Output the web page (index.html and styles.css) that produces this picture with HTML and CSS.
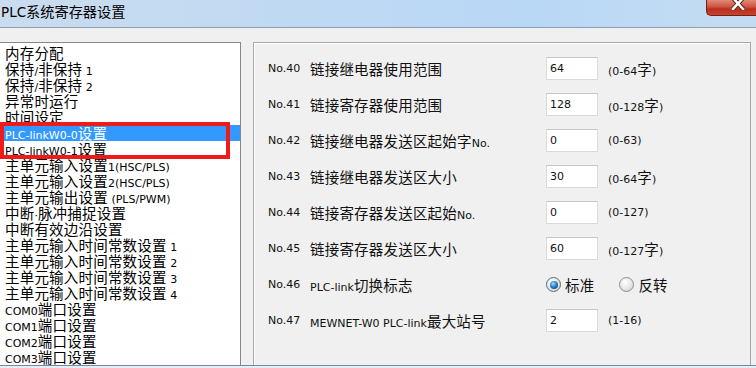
FILE: index.html
```html
<!DOCTYPE html>
<html>
  <head>
    <title>PLC系统寄存器设置</title>
    <link rel="stylesheet" href="styles.css">
  </head>

  <body>
    <div class="window">
      <div class="titlebar">
        <div class="title">PLC<span class="h">系统寄存器设置</span></div>
        <div class="close">
          <svg width="14" height="13" viewBox="0 0 14 13">
            <path d="M2 1 L12 12 M12 1 L2 12" stroke="#5a1a12" stroke-width="4.4" stroke-linecap="square"/>
            <path d="M2 1 L12 12 M12 1 L2 12" stroke="#ffffff" stroke-width="2.6" stroke-linecap="square"/>
          </svg>
        </div>
      </div>

      <div class="main">
        <ul class="list">
          <li><span class="h">内存分配</span></li>
          <li><span class="h">保持</span>/<span class="h">非保持</span> 1</li>
          <li><span class="h">保持</span>/<span class="h">非保持</span> 2</li>
          <li><span class="h">异常时运行</span></li>
          <li><span class="h">时间设定</span></li>
          <li class="sel">PLC-linkW0-0<span class="h">设置</span></li>
          <li>PLC-linkW0-1<span class="h">设置</span></li>
          <li><span class="h">主单元输入设置</span>1(HSC/PLS)</li>
          <li><span class="h">主单元输入设置</span>2(HSC/PLS)</li>
          <li><span class="h">主单元输出设置</span> (PLS/PWM)</li>
          <li><span class="h">中断</span>·<span class="h">脉冲捕捉设置</span></li>
          <li><span class="h">中断有效边沿设置</span></li>
          <li><span class="h">主单元输入时间常数设置</span> 1</li>
          <li><span class="h">主单元输入时间常数设置</span> 2</li>
          <li><span class="h">主单元输入时间常数设置</span> 3</li>
          <li><span class="h">主单元输入时间常数设置</span> 4</li>
          <li>COM0<span class="h">端口设置</span></li>
          <li>COM1<span class="h">端口设置</span></li>
          <li>COM2<span class="h">端口设置</span></li>
          <li>COM3<span class="h">端口设置</span></li>
          <div class="mark"></div>
        </ul>

        <div class="panel">
          <div class="row">
            <span class="no">No.40</span>
            <span class="name"><span class="h">链接继电器使用范围</span></span>
            <span class="val">64</span>
            <span class="range">(0-64<span class="h">字</span>)</span>
          </div>
          <div class="row">
            <span class="no">No.41</span>
            <span class="name"><span class="h">链接寄存器使用范围</span></span>
            <span class="val">128</span>
            <span class="range">(0-128<span class="h">字</span>)</span>
          </div>
          <div class="row">
            <span class="no">No.42</span>
            <span class="name"><span class="h">链接继电器发送区起始字</span>No.</span>
            <span class="val">0</span>
            <span class="range">(0-63)</span>
          </div>
          <div class="row">
            <span class="no">No.43</span>
            <span class="name"><span class="h">链接继电器发送区大小</span></span>
            <span class="val">30</span>
            <span class="range">(0-64<span class="h">字</span>)</span>
          </div>
          <div class="row">
            <span class="no">No.44</span>
            <span class="name"><span class="h">链接寄存器发送区起始</span>No.</span>
            <span class="val">0</span>
            <span class="range">(0-127)</span>
          </div>
          <div class="row">
            <span class="no">No.45</span>
            <span class="name"><span class="h">链接寄存器发送区大小</span></span>
            <span class="val">60</span>
            <span class="range">(0-127<span class="h">字</span>)</span>
          </div>
          <div class="row">
            <span class="no">No.46</span>
            <span class="name">PLC-link<span class="h">切换标志</span></span>
            <span class="radio on"><i></i><span class="h">标准</span></span>
            <span class="radio"><i></i><span class="h">反转</span></span>
          </div>
          <div class="row">
            <span class="no">No.47</span>
            <span class="name">MEWNET-W0 PLC-link<span class="h">最大站号</span></span>
            <span class="val">2</span>
            <span class="range">(1-16)</span>
          </div>
        </div>
      </div>

      <div class="foot"></div>
    </div>
  </body>
</html>
```

FILE: styles.css
```css
* {
  box-sizing: border-box;
}

body {
  margin: 0;
  font-family: "DejaVu Sans", "Noto Sans CJK SC", sans-serif;
  font-size: 11px;
  color: #000;
}

.h {
  font-family: "Noto Sans CJK SC", sans-serif;
  font-size: 14.5px;
  letter-spacing: 0.2px;
}

.window {
  width: 756px;
  height: 368px;
  overflow: hidden;
  background: #f0f0f0;
  display: flex;
  flex-direction: column;
}

/* title bar */

.titlebar {
  height: 28px;
  flex: none;
  display: flex;
  align-items: flex-start;
  background: linear-gradient(to right, #cadcee 0%, #bfd9f3 40%, #b9d8f6 70%, #c4dcf2 100%);
  border-bottom: 1px solid #8e9cad;
}

.title {
  padding-left: 1px;
  font-size: 13.5px;
  line-height: 22px;
  white-space: nowrap;
}

.title .h {
  font-size: 14.2px;
  letter-spacing: 0;
}

.close {
  margin-left: auto;
  width: 50px;
  height: 16px;
  padding-left: 24px;
  overflow: hidden;
  background: linear-gradient(#e08a78, #cf5440 45%, #b8301d 60%, #c9422c);
  border-left: 1px solid #6e2418;
  border-bottom: 1px solid #6e2418;
  border-bottom-left-radius: 5px;
}

.close svg {
  display: block;
  margin-top: -3px;
}

/* body */

.main {
  flex: 1;
  display: flex;
  gap: 12px;
  padding-top: 14px;
}

.list {
  position: relative;
  width: 241px;
  margin: 0;
  padding: 2px 0 0 0;
  list-style: none;
  background: #fff;
  border-top: 1px solid #828790;
  border-right: 1px solid #828790;
}

.list li {
  height: 16px;
  line-height: 16px;
  padding-left: 5px;
  white-space: nowrap;
}

.list li .h {
  line-height: 16px;
}

.list .sel {
  background: #3399ff;
  color: #fff;
}

.mark {
  position: absolute;
  left: 0;
  top: 79px;
  width: 230px;
  height: 37px;
  border: 4px solid #ee1b1b;
}

.panel {
  width: 498px;
  display: flex;
  flex-direction: column;
  gap: 13px;
  padding: 14px 0 0 14px;
  border: 1px solid #a8a8a8;
  border-bottom: none;
  box-shadow: inset 1px 1px 0 #fff;
}

.row {
  display: flex;
  align-items: center;
  height: 23px;
  white-space: nowrap;
  color: #111;
}

.row .h {
  line-height: 18px;
}

.no {
  width: 42px;
}

.name {
  width: 236px;
}

.val {
  width: 52px;
  height: 23px;
  padding-left: 3px;
  line-height: 21px;
  background: #fff;
  border: 1px solid #dadada;
  border-top-color: #c9c9c9;
}

.range {
  margin-left: 10px;
}

.radio {
  display: flex;
  align-items: center;
  gap: 4px;
}

.radio + .radio {
  margin-left: 25px;
}

.radio i {
  width: 15px;
  height: 15px;
  border-radius: 50%;
  border: 1px solid #8f8f8f;
  background: radial-gradient(circle at 40% 35%, #ffffff, #e6e6e6 55%, #c4c4c4);
  display: flex;
  align-items: center;
  justify-content: center;
}

.radio.on i {
  border-color: #5d6a78;
}

.radio.on i::after {
  content: "";
  width: 8px;
  height: 8px;
  border-radius: 50%;
  background: radial-gradient(circle at 40% 35%, #a8e0ff, #2a7fc4 45%, #0b3560);
}

.foot {
  height: 4px;
  flex: none;
  border-top: 1px solid #7088ad;
  background: #e8edf4;
}
```
